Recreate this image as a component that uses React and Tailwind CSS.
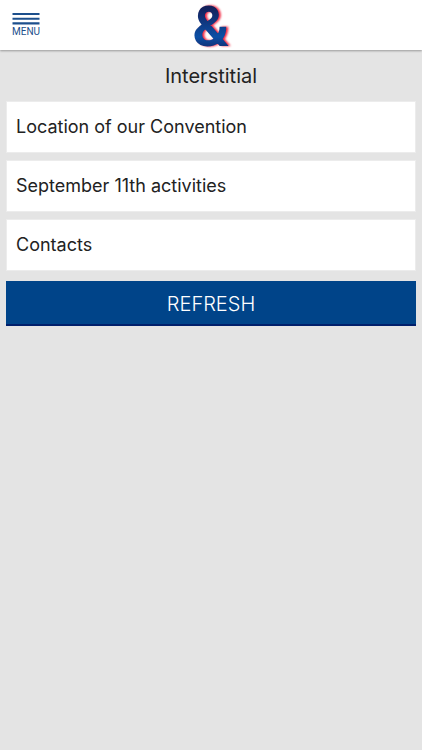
const links = [
  { id: 1, label: "Location of our Convention" },
  { id: 2, label: "September 11th activities" },
  { id: 3, label: "Contacts" },
];

const MenuIcon = () => (
  <svg width="28" height="13" viewBox="0 0 28 13" aria-hidden="true">
    <path d="M0.5 2H27.5M0.5 6.7H27.5M0.5 11.4H27.5" stroke="#1c4f8c" strokeWidth="2.1" />
  </svg>
);

const Header = () => {
  return (
    <header className="relative flex h-[50px] items-center justify-center bg-white shadow-[0_1px_2px_#999999]">
      <button
        type="button"
        className="absolute left-3 top-3 flex flex-col items-center text-[#1c4f8c]"
      >
        <MenuIcon />
        <span className="font-['Roboto',sans-serif] text-[10px] leading-[14px]">MENU</span>
      </button>
      <svg
        width="50"
        height="50"
        viewBox="0 0 50 50"
        role="img"
        aria-label="Home"
        className="overflow-visible"
      >
        <defs>
          <linearGradient id="logoFill" x1="0" y1="0" x2="0" y2="1">
            <stop offset="0.2" stopColor="#14205a" />
            <stop offset="0.65" stopColor="#0b4fa5" />
            <stop offset="0.85" stopColor="#15296b" />
          </linearGradient>
        </defs>
        <text
          x="25"
          y="46"
          textAnchor="middle"
          fill="url(#logoFill)"
          className="font-['Roboto',sans-serif] text-[56px] font-bold drop-shadow-[2px_0_1px_#f0203c]"
        >
          &amp;
        </text>
      </svg>
    </header>
  );
};

const App = () => {
  return (
    <div className="min-h-screen bg-[#e4e4e4] font-['Inter',sans-serif] text-[#222222]">
      <Header />
      <main className="px-1.5">
        <h1 className="pt-[13px] pb-[11px] text-center text-xl leading-[27px]">Interstitial</h1>
        <nav className="flex flex-col gap-[7px]">
          {links.map((item) => (
            <a
              key={item.id}
              href="#"
              className="border border-[#ececec] bg-white px-[9px] py-3 text-lg leading-[26px]"
            >
              {item.label}
            </a>
          ))}
        </nav>
        <button
          type="button"
          className="mt-2.5 h-[45px] w-full border-b-2 border-[#001f6b] bg-[#004489] pt-0.5 text-xl font-light text-white"
        >
          REFRESH
        </button>
      </main>
    </div>
  );
};

export default App;
